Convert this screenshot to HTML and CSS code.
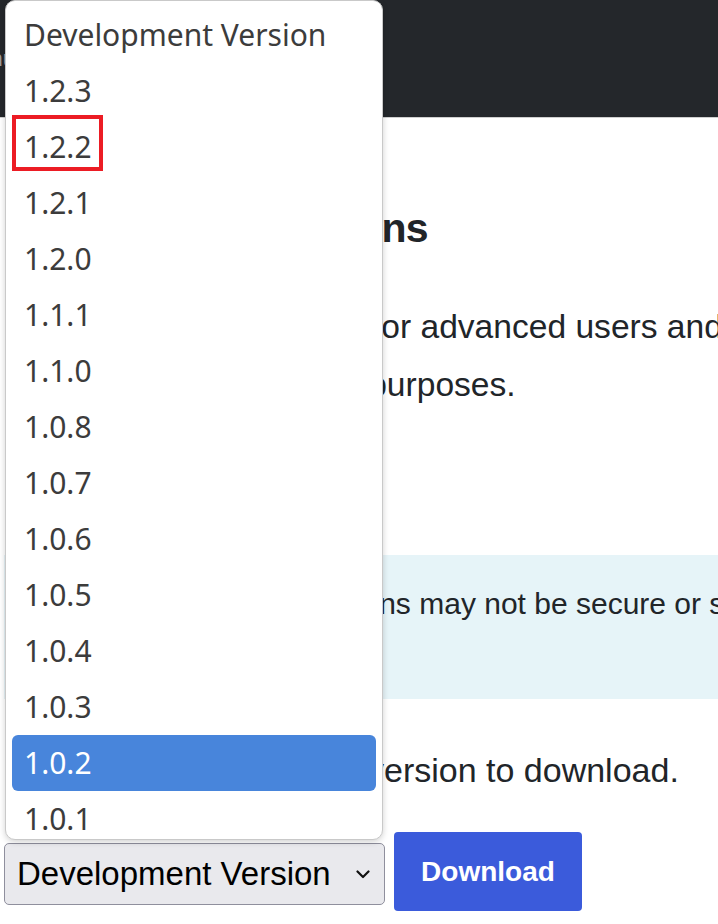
FILE: index.html
```html
<!DOCTYPE html>
<html lang="en">
<head>
<meta charset="utf-8">
<title>Development Versions</title>
<link rel="stylesheet" href="styles.css">
</head>
<body>
<header class="navbar">
  <span class="brand">Menu</span>
</header>
<main class="content">
  <h2 class="title">Development Versions</h2>
  <p class="intro">Recent builds are made for advanced users and developers.<br>They are just for testing purposes.</p>
  <div class="alert">Note: development versions may not be secure or stable. Use them at your own risk.</div>
  <p class="prompt">Please select a release version to download.</p>
  <form class="download-form">
    <div class="select-box">
      <span>Development Version</span>
      <svg class="chevron" width="14" height="9" viewBox="0 0 14 9"><path d="M1.5 1.5l5.5 5.5 5.5-5.5" fill="none" stroke="#111" stroke-width="2.2" stroke-linecap="round" stroke-linejoin="round"/></svg>
    </div>
    <button type="button" class="btn">Download</button>
  </form>
</main>
<ul class="popup">
  <li>Development Version</li>
  <li>1.2.3</li>
  <li>1.2.2</li>
  <li>1.2.1</li>
  <li>1.2.0</li>
  <li>1.1.1</li>
  <li>1.1.0</li>
  <li>1.0.8</li>
  <li>1.0.7</li>
  <li>1.0.6</li>
  <li>1.0.5</li>
  <li>1.0.4</li>
  <li>1.0.3</li>
  <li class="active">1.0.2</li>
  <li>1.0.1</li>
</ul>
<div class="marker"></div>
</body>
</html>
```
FILE: styles.css
```css
html, body {
  margin: 0;
  height: 924px;
  overflow: hidden;
}
body {
  position: relative;
  width: 718px;
  background: #fff;
  color: #212529;
  font-family: "Liberation Sans", Arial, sans-serif;
}
.navbar {
  height: 117px;
  background: #24272b;
  border-bottom: 1px solid #cfcfcf;
  display: flex;
  align-items: center;
}
.brand {
  color: #9a9da0;
  font-size: 22px;
  margin-left: -40px;
}
.content {
  width: 1600px;
  padding-left: 4px;
}
.title {
  margin: 86px 0 0;
  font-size: 41px;
  line-height: 49px;
  font-weight: 700;
  letter-spacing: -0.8px;
}
.intro {
  margin: 45px 0 0;
  padding-left: 4px;
  font-size: 33.6px;
  line-height: 58px;
}
.alert {
  margin-top: 141px;
  height: 120px;
  padding: 24px 33px 0 35px;
  background: #e6f4f8;
  font-size: 30px;
  line-height: 50px;
  white-space: nowrap;
}
.prompt {
  margin: 46px 0 0;
  padding-left: 2px;
  font-size: 34px;
  line-height: 50px;
}
.download-form {
  display: flex;
  align-items: flex-start;
  gap: 9px;
  margin-top: 37px;
}
.select-box {
  box-sizing: border-box;
  width: 381px;
  height: 62px;
  margin-top: 11px;
  padding: 0 14px 0 12px;
  display: flex;
  align-items: center;
  justify-content: space-between;
  background: #e9e9ed;
  border: 1px solid #8f8f9d;
  border-radius: 5px;
  font-size: 33px;
  color: #000;
}
.btn {
  width: 188px;
  height: 79px;
  border: 0;
  border-radius: 4px;
  background: #3b5bdb;
  color: #fff;
  font-family: "Liberation Sans", Arial, sans-serif;
  font-size: 28px;
  font-weight: 700;
}
.popup {
  position: absolute;
  left: 5px;
  top: 0;
  box-sizing: border-box;
  width: 378px;
  height: 840px;
  margin: 0;
  padding: 6px 6px 0;
  list-style: none;
  overflow: hidden;
  background: #fff;
  border: 1px solid #c9c9c9;
  border-radius: 10px;
  box-shadow: 0 2px 6px rgba(0, 0, 0, 0.18);
  font-family: "Noto Sans", "Open Sans", sans-serif;
  font-size: 30px;
  color: #3c3c3c;
}
.popup li {
  height: 56px;
  line-height: 56px;
  padding-left: 12px;
  border-radius: 6px;
}
.popup li.active {
  background: #4885db;
  color: #fff;
}
.marker {
  position: absolute;
  left: 12px;
  top: 115px;
  box-sizing: border-box;
  width: 91px;
  height: 56px;
  border: 4px solid #ec1c24;
}
```
